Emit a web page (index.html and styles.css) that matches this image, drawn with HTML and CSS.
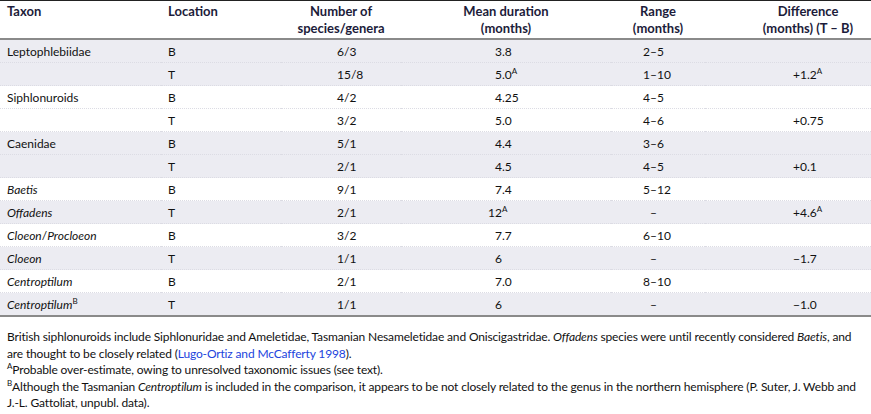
FILE: index.html
```html
<!DOCTYPE html>
<html>
<head>
<meta charset="utf-8">
<link rel="stylesheet" href="styles.css">
</head>
<body>
<table class="tbl">
  <colgroup>
    <col class="c1"><col class="c2"><col class="c3"><col class="c4"><col class="c5"><col class="c6">
  </colgroup>
  <thead>
    <tr>
      <th class="left first">Taxon</th>
      <th class="left first">Location</th>
      <th>Number of<br>species/genera</th>
      <th>Mean duration<br>(months)</th>
      <th>Range<br>(months)</th>
      <th class="diffh">Difference<br>(months) (T – B)</th>
    </tr>
  </thead>
  <tbody>
    <tr class="g"><td class="first">Leptophlebiidae</td><td class="first">B</td><td class="num">6/3</td><td class="mean"><span class="i">3</span>.8</td><td class="rng">2–5</td><td class="dif"></td></tr>
    <tr class="g"><td class="first"></td><td class="first">T</td><td class="num">15/8</td><td class="mean"><span class="i">5</span>.0<sup>A</sup></td><td class="rng">1–10</td><td class="dif">+1.2<sup>A</sup></td></tr>
    <tr><td class="first">Siphlonuroids</td><td class="first">B</td><td class="num">4/2</td><td class="mean"><span class="i">4</span>.25</td><td class="rng">4–5</td><td class="dif"></td></tr>
    <tr><td class="first"></td><td class="first">T</td><td class="num">3/2</td><td class="mean"><span class="i">5</span>.0</td><td class="rng">4–6</td><td class="dif">+0.75</td></tr>
    <tr class="g"><td class="first">Caenidae</td><td class="first">B</td><td class="num">5/1</td><td class="mean"><span class="i">4</span>.4</td><td class="rng">3–6</td><td class="dif"></td></tr>
    <tr class="g"><td class="first"></td><td class="first">T</td><td class="num">2/1</td><td class="mean"><span class="i">4</span>.5</td><td class="rng">4–5</td><td class="dif">+0.1</td></tr>
    <tr><td class="first"><i>Baetis</i></td><td class="first">B</td><td class="num">9/1</td><td class="mean"><span class="i">7</span>.4</td><td class="rng">5–12</td><td class="dif"></td></tr>
    <tr class="g"><td class="first"><i>Offadens</i></td><td class="first">T</td><td class="num">2/1</td><td class="mean"><span class="i">12</span><sup>A</sup></td><td class="rng"><span class="dash">–</span></td><td class="dif">+4.6<sup>A</sup></td></tr>
    <tr><td class="first"><i>Cloeon</i>/<i>Procloeon</i></td><td class="first">B</td><td class="num">3/2</td><td class="mean"><span class="i">7</span>.7</td><td class="rng">6–10</td><td class="dif"></td></tr>
    <tr class="g"><td class="first"><i>Cloeon</i></td><td class="first">T</td><td class="num">1/1</td><td class="mean"><span class="i">6</span></td><td class="rng"><span class="dash">–</span></td><td class="dif">−1.7</td></tr>
    <tr><td class="first"><i>Centroptilum</i></td><td class="first">B</td><td class="num">2/1</td><td class="mean"><span class="i">7</span>.0</td><td class="rng">8–10</td><td class="dif"></td></tr>
    <tr class="g last"><td class="first"><i>Centroptilum</i><sup>B</sup></td><td class="first">T</td><td class="num">1/1</td><td class="mean"><span class="i">6</span></td><td class="rng"><span class="dash">–</span></td><td class="dif">−1.0</td></tr>
  </tbody>
</table>
<div class="notes">
  <p>British siphlonuroids include Siphlonuridae and Ameletidae, Tasmanian Nesameletidae and Oniscigastridae. <i>Offadens</i> species were until recently considered <i>Baetis</i>, and <span class="nw">are thought</span> to be closely related (<a class="ref" href="#">Lugo-Ortiz and McCafferty 1998</a>).</p>
  <p><sup>A</sup>Probable over-estimate, owing to unresolved taxonomic issues (see text).</p>
  <p><sup>B</sup>Although the Tasmanian <i>Centroptilum</i> is included in the comparison, it appears to be not closely related to the genus in the northern hemisphere (P. Suter, J. Webb and <span class="nw">J.-L. Gattoliat</span>, unpubl. data).</p>
</div>
</body>
</html>
```

FILE: styles.css
```css
html, body {
  margin: 0;
  padding: 0;
  background: #ffffff;
}
body {
  font-family: "Lato", "Open Sans", sans-serif;
  font-size: 12px;
  color: #111111;
}
.tbl {
  width: 871px;
  border-collapse: collapse;
  table-layout: fixed;
  border-top: 1px solid #222222;
}
.c1 { width: 161px; }
.c2 { width: 120px; }
.c3 { width: 120px; }
.c4 { width: 210px; }
.c5 { width: 94px; }
.c6 { width: 166px; }
th {
  font-size: 13px;
  font-weight: 700;
  color: #1c1c3a;
  text-align: center;
  vertical-align: top;
  line-height: 17px;
  padding: 2px 0 1px 0;
  border-bottom: 2px solid #8a8a8a;
  white-space: nowrap;
}
th.left { text-align: left; }
th.diffh { padding-left: 40px; }
.first { padding-left: 7px; }
td {
  height: 22px;
  padding: 0;
  vertical-align: middle;
  border-bottom: 1px dotted #dcdce4;
  white-space: nowrap;
}
tr.g td { background: #ececf2; }
tr.last td { border-bottom: 2px solid #8a8a8a; }
td.first { padding-left: 7px; }
td.num { padding-left: 56px; }
td.mean { padding-left: 87px; }
td.mean .i { display: inline-block; width: 14px; text-align: right; }
td.rng { padding-left: 32px; }
td.rng .dash { padding-left: 7px; }
td.dif { padding-left: 88px; }
sup {
  font-size: 8px;
  line-height: 0;
  vertical-align: 5px;
}
.notes {
  margin-top: 12px;
  padding: 0 6px 0 7px;
  line-height: 16.5px;
  letter-spacing: -0.15px;
}
.notes p { margin: 0; }
.nw { white-space: nowrap; }
.ref { color: #2244dd; text-decoration: none; }
```
